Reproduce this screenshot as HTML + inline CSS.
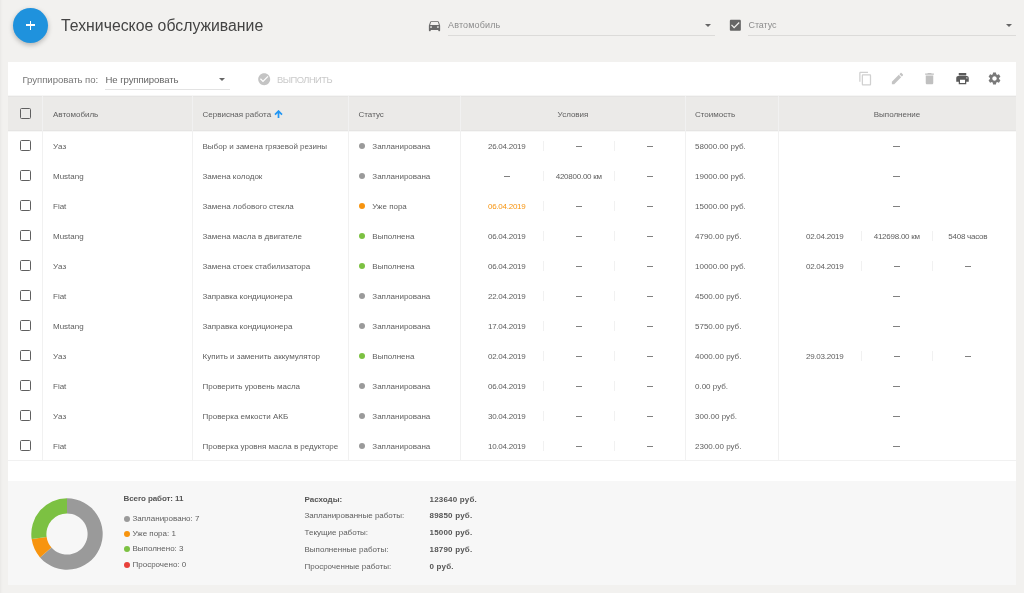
<!DOCTYPE html>
<html><head><meta charset="utf-8">
<style>
*{box-sizing:border-box;margin:0;padding:0}
html,body{width:1024px;height:593px;overflow:hidden}
body{background:#f2f1ef;font-family:"Liberation Sans",sans-serif;color:#5e5e5e;position:relative}
#w{position:absolute;left:0;top:0;width:1024px;height:593px;will-change:transform}
.abs{position:absolute}
.tx{white-space:nowrap}
.fab{left:13px;top:7.6px;width:35px;height:35px;border-radius:50%;background:#1f92dd;box-shadow:0 2px 5px rgba(0,0,0,.26)}
.uline{height:1px;background:#dcdbd9}
.arrow{width:0;height:0;border-left:3px solid transparent;border-right:3px solid transparent;border-top:3px solid #666}
.cb{width:11px;height:11px;border:1.7px solid #5f5f5f;border-radius:1.5px}
.vl{width:1px;background:#f1f1f1}
.dot{width:6px;height:6px;border-radius:50%}
</style></head><body><div id="w">
<div class="abs fab"><div class="abs" style="left:13px;top:16.7px;width:9px;height:1.6px;background:#fff"></div><div class="abs" style="left:16.7px;top:13px;width:1.6px;height:9px;background:#fff"></div></div>
<div class="abs tx" style="left:61px;top:15.95px;font-size:15.8px;line-height:19.75px;color:#444">Техническое обслуживание</div>
<svg class="abs" style="left:427px;top:17.5px" width="15" height="15" viewBox="0 0 24 24"><path fill="#6a6a6a" d="M18.92 6.01C18.72 5.42 18.160 5 17.5 5h-11c-.66 0-1.21.42-1.42 1.01L3 12v8c0 .55.45 1 1 1h1c.55 0 1-.45 1-1v-1h12v1c0 .55.45 1 1 1h1c.55 0 1-.45 1-1v-8l-2.08-5.99zM6.5 16c-.83 0-1.5-.67-1.5-1.5S5.67 13 6.5 13s1.5.67 1.5 1.5S7.33 16 6.5 16zm11 0c-.83 0-1.5-.67-1.5-1.5s.67-1.5 1.5-1.5 1.5.67 1.5 1.5-.67 1.5-1.5 1.5zM5 11l1.5-4.5h11L19 11H5z"/></svg>
<div class="abs tx" style="left:448px;top:20.25px;font-size:9px;line-height:11.25px;color:#8c8c8c;letter-spacing:0.15px">Автомобиль</div>
<div class="abs arrow" style="left:705px;top:24px"></div>
<div class="abs uline" style="left:448px;top:35px;width:267px"></div>
<svg class="abs" style="left:728.1px;top:18.2px" width="14.7" height="14.7" viewBox="0 0 24 24"><path fill="#666" d="M19 3H5c-1.11 0-2 .9-2 2v14c0 1.1.89 2 2 2h14c1.11 0 2-.9 2-2V5c0-1.1-.89-2-2-2zm-9 14l-5-5 1.41-1.41L10 14.17l7.59-7.59L19 8l-9 9z"/></svg>
<div class="abs tx" style="left:748.5px;top:20.25px;font-size:9px;line-height:11.25px;color:#8c8c8c;letter-spacing:-0.1px">Статус</div>
<div class="abs arrow" style="left:1005.5px;top:24px"></div>
<div class="abs uline" style="left:748px;top:35px;width:268px"></div>
<div class="abs" style="left:0;top:0;width:3px;height:593px;background:linear-gradient(to right,#e9e8e6,#efeeec 50%,#f2f1ef)"></div>
<div class="abs" style="left:8px;top:61.5px;width:1008px;height:523.5px;background:#fff"></div>
<div class="abs" style="left:8px;top:96px;width:1008px;height:35px;background:#ebeae8"></div>
<div class="abs" style="left:8px;top:95px;width:1008px;height:1px;background:#f6f6f5"></div>
<div class="abs" style="left:8px;top:96px;width:1008px;height:1px;background:#e5e4e3"></div>
<div class="abs" style="left:8px;top:130px;width:1008px;height:1px;background:#e5e4e3"></div>
<div class="abs" style="left:8px;top:131px;width:1008px;height:1px;background:#f7f7f6"></div>
<div class="abs" style="left:8px;top:481px;width:1008px;height:104px;background:#f7f7f7"></div>
<div class="abs tx" style="left:22.5px;top:73.87px;font-size:9.6px;line-height:12.0px;color:#777;letter-spacing:-0.05px">Группировать по:</div>
<div class="abs tx" style="left:105.5px;top:73.87px;font-size:9.6px;line-height:12.0px;color:#666;letter-spacing:-0.1px">Не группировать</div>
<div class="abs arrow" style="left:219px;top:78px"></div>
<div class="abs uline" style="left:105px;top:89px;width:125px;background:#e3e3e3"></div>
<svg class="abs" style="left:256.8px;top:71.8px" width="14.4" height="14.4" viewBox="0 0 24 24"><path fill="#c4c4c4" d="M12 2C6.48 2 2 6.48 2 12s4.48 10 10 10 10-4.48 10-10S17.52 2 12 2zm-2 15l-5-5 1.41-1.41L10 14.17l7.59-7.59L19 8l-9 9z"/></svg>
<div class="abs tx" style="left:277px;top:73.67px;font-size:9.4px;line-height:11.75px;color:#cacaca;letter-spacing:-0.55px">ВЫПОЛНИТЬ</div>
<svg class="abs" style="left:857.55px;top:71.0px" width="15" height="15" viewBox="0 0 24 24"><path fill="#d0d0d0" d="M16 1H4c-1.1 0-2 .9-2 2v14h2V3h12V1zm3 4H8c-1.1 0-2 .9-2 2v14c0 1.1.9 2 2 2h11c1.1 0 2-.9 2-2V7c0-1.1-.9-2-2-2zm0 16H8V7h11v14z"/></svg>
<svg class="abs" style="left:890.0px;top:71.1px" width="15" height="15" viewBox="0 0 24 24"><path fill="#c4c4c4" d="M3 17.25V21h3.75L17.81 9.94l-3.75-3.75L3 17.25zM20.71 7.04c.39-.39.39-1.02 0-1.41l-2.34-2.34c-.39-.39-1.02-.39-1.41 0l-1.83 1.83 3.75 3.75 1.83-1.83z"/></svg>
<svg class="abs" style="left:922.1px;top:70.7px" width="15" height="15" viewBox="0 0 24 24"><path fill="#c0c0c0" d="M6 19c0 1.1.9 2 2 2h8c1.1 0 2-.9 2-2V7H6v12zM19 4h-3.5l-1-1h-5l-1 1H5v2h14V4z"/></svg>
<svg class="abs" style="left:954.75px;top:71.0px" width="15" height="15" viewBox="0 0 24 24"><path fill="#5a5a5a" d="M19 8H5c-1.66 0-3 1.34-3 3v6h4v4h12v-4h4v-6c0-1.66-1.34-3-3-3zm-3 11H8v-5h8v5zm3-7c-.55 0-1-.45-1-1s.45-1 1-1 1 .45 1 1-.45 1-1 1zm-1-9H6v4h12V3z"/></svg>
<svg class="abs" style="left:987.1px;top:70.95px" width="15" height="15" viewBox="0 0 24 24"><path fill="#7a7a7a" d="M19.14 12.94c.04-.3.06-.61.06-.94 0-.32-.02-.64-.07-.94l2.03-1.58c.18-.14.23-.41.12-.61l-1.92-3.32c-.12-.22-.37-.29-.59-.22l-2.39.96c-.5-.38-1.03-.7-1.620-.94l-.36-2.54c-.04-.24-.24-.41-.48-.41h-3.84c-.24 0-.43.17-.47.41l-.36 2.54c-.59.24-1.13.57-1.62.94l-2.39-.96c-.22-.08-.47 0-.59.22L2.740 8.87c-.12.21-.08.47.12.61l2.03 1.58c-.05.3-.09.63-.09.94s.02.64.07.94l-2.03 1.58c-.18.14-.23.41-.12.61l1.92 3.32c.12.22.37.29.59.22l2.39-.96c.5.38 1.03.7 1.62.94l.36 2.54c.05.24.24.41.48.41h3.84c.24 0 .44-.17.47-.41l.36-2.54c.59-.24 1.13-.56 1.62-.94l2.39.96c.22.08.47 0 .59-.22l1.92-3.32c.12-.22.07-.47-.12-.61l-2.01-1.58zM12 15.6c-1.98 0-3.6-1.62-3.6-3.6s1.62-3.6 3.6-3.6 3.6 1.62 3.6 3.6-1.620 3.6-3.6 3.6z"/></svg>
<div class="abs vl" style="left:42px;top:96px;height:365px"></div>
<div class="abs vl" style="left:192px;top:96px;height:365px"></div>
<div class="abs vl" style="left:348px;top:96px;height:365px"></div>
<div class="abs vl" style="left:460px;top:96px;height:365px"></div>
<div class="abs vl" style="left:685px;top:96px;height:365px"></div>
<div class="abs vl" style="left:778px;top:96px;height:365px"></div>
<div class="abs" style="left:8px;top:460px;width:1008px;height:1px;background:#f1f1f1"></div>
<div class="abs cb" style="left:20px;top:108px"></div>
<div class="abs tx" style="left:53px;top:109.83px;font-size:8.0px;line-height:10.0px;color:#5e5e5e;letter-spacing:0px">Автомобиль</div>
<div class="abs tx" style="left:202.5px;top:109.83px;font-size:8.0px;line-height:10.0px;color:#5e5e5e;letter-spacing:0px">Сервисная работа</div>
<svg class="abs" style="left:274px;top:110px" width="9" height="8" viewBox="0 0 9 8"><path fill="none" stroke="#2196f3" stroke-width="1.7" d="M4.5 8V1.2M1 4.6L4.5 1.1 8 4.6"/></svg>
<div class="abs tx" style="left:358.5px;top:109.83px;font-size:8.0px;line-height:10.0px;color:#5e5e5e;letter-spacing:0px">Статус</div>
<div class="abs tx" style="left:461px;top:109.83px;font-size:8.0px;line-height:10.0px;color:#5e5e5e;width:224px;text-align:center;letter-spacing:0px">Условия</div>
<div class="abs tx" style="left:695px;top:109.83px;font-size:8.0px;line-height:10.0px;color:#5e5e5e;letter-spacing:0px">Стоимость</div>
<div class="abs tx" style="left:778px;top:109.83px;font-size:8.0px;line-height:10.0px;color:#5e5e5e;width:238px;text-align:center;letter-spacing:0px">Выполнение</div>
<div class="abs cb" style="left:20px;top:140px"></div>
<div class="abs tx" style="left:53px;top:141.83px;font-size:8.0px;line-height:10.0px;color:#5e5e5e;letter-spacing:0px">Уаз</div>
<div class="abs tx" style="left:202.5px;top:141.83px;font-size:8.0px;line-height:10.0px;color:#5e5e5e;letter-spacing:0px">Выбор и замена грязевой резины</div>
<div class="abs dot" style="left:359px;top:143.2px;background:#9a9a9a"></div>
<div class="abs tx" style="left:372.3px;top:141.83px;font-size:8.0px;line-height:10.0px;color:#5e5e5e;letter-spacing:0px">Запланирована</div>
<div class="abs tx" style="left:471px;top:141.83px;font-size:8.0px;line-height:10.0px;color:#5e5e5e;width:71.5px;text-align:center;letter-spacing:-0.25px">26.04.2019</div>
<div class="abs" style="left:575.55px;top:146.10px;width:6.6px;height:1.3px;background:#808080"></div>
<div class="abs" style="left:646.55px;top:146.10px;width:6.6px;height:1.3px;background:#808080"></div>
<div class="abs vl" style="left:542.5px;top:141px;height:10px"></div>
<div class="abs vl" style="left:614px;top:141px;height:10px"></div>
<div class="abs tx" style="left:695px;top:141.83px;font-size:8.0px;line-height:10.0px;color:#5e5e5e;letter-spacing:0px">58000.00 руб.</div>
<div class="abs" style="left:893.30px;top:146.10px;width:6.6px;height:1.3px;background:#808080"></div>
<div class="abs cb" style="left:20px;top:170px"></div>
<div class="abs tx" style="left:53px;top:171.83px;font-size:8.0px;line-height:10.0px;color:#5e5e5e;letter-spacing:0px">Mustang</div>
<div class="abs tx" style="left:202.5px;top:171.83px;font-size:8.0px;line-height:10.0px;color:#5e5e5e;letter-spacing:0px">Замена колодок</div>
<div class="abs dot" style="left:359px;top:173.2px;background:#9a9a9a"></div>
<div class="abs tx" style="left:372.3px;top:171.83px;font-size:8.0px;line-height:10.0px;color:#5e5e5e;letter-spacing:0px">Запланирована</div>
<div class="abs" style="left:503.55px;top:176.10px;width:6.6px;height:1.3px;background:#808080"></div>
<div class="abs tx" style="left:543px;top:171.83px;font-size:8.0px;line-height:10.0px;color:#5e5e5e;width:71.5px;text-align:center;letter-spacing:-0.25px">420800.00 км</div>
<div class="abs" style="left:646.55px;top:176.10px;width:6.6px;height:1.3px;background:#808080"></div>
<div class="abs vl" style="left:542.5px;top:171px;height:10px"></div>
<div class="abs vl" style="left:614px;top:171px;height:10px"></div>
<div class="abs tx" style="left:695px;top:171.83px;font-size:8.0px;line-height:10.0px;color:#5e5e5e;letter-spacing:0px">19000.00 руб.</div>
<div class="abs" style="left:893.30px;top:176.10px;width:6.6px;height:1.3px;background:#808080"></div>
<div class="abs cb" style="left:20px;top:200px"></div>
<div class="abs tx" style="left:53px;top:201.83px;font-size:8.0px;line-height:10.0px;color:#5e5e5e;letter-spacing:0px">Fiat</div>
<div class="abs tx" style="left:202.5px;top:201.83px;font-size:8.0px;line-height:10.0px;color:#5e5e5e;letter-spacing:0px">Замена лобового стекла</div>
<div class="abs dot" style="left:359px;top:203.2px;background:#f7940f"></div>
<div class="abs tx" style="left:372.3px;top:201.83px;font-size:8.0px;line-height:10.0px;color:#5e5e5e;letter-spacing:0px">Уже пора</div>
<div class="abs tx" style="left:471px;top:201.83px;font-size:8.0px;line-height:10.0px;color:#f7940f;width:71.5px;text-align:center;letter-spacing:-0.25px">06.04.2019</div>
<div class="abs" style="left:575.55px;top:206.10px;width:6.6px;height:1.3px;background:#808080"></div>
<div class="abs" style="left:646.55px;top:206.10px;width:6.6px;height:1.3px;background:#808080"></div>
<div class="abs vl" style="left:542.5px;top:201px;height:10px"></div>
<div class="abs vl" style="left:614px;top:201px;height:10px"></div>
<div class="abs tx" style="left:695px;top:201.83px;font-size:8.0px;line-height:10.0px;color:#5e5e5e;letter-spacing:0px">15000.00 руб.</div>
<div class="abs" style="left:893.30px;top:206.10px;width:6.6px;height:1.3px;background:#808080"></div>
<div class="abs cb" style="left:20px;top:230px"></div>
<div class="abs tx" style="left:53px;top:231.83px;font-size:8.0px;line-height:10.0px;color:#5e5e5e;letter-spacing:0px">Mustang</div>
<div class="abs tx" style="left:202.5px;top:231.83px;font-size:8.0px;line-height:10.0px;color:#5e5e5e;letter-spacing:0px">Замена масла в двигателе</div>
<div class="abs dot" style="left:359px;top:233.2px;background:#7cc142"></div>
<div class="abs tx" style="left:372.3px;top:231.83px;font-size:8.0px;line-height:10.0px;color:#5e5e5e;letter-spacing:0px">Выполнена</div>
<div class="abs tx" style="left:471px;top:231.83px;font-size:8.0px;line-height:10.0px;color:#5e5e5e;width:71.5px;text-align:center;letter-spacing:-0.25px">06.04.2019</div>
<div class="abs" style="left:575.55px;top:236.10px;width:6.6px;height:1.3px;background:#808080"></div>
<div class="abs" style="left:646.55px;top:236.10px;width:6.6px;height:1.3px;background:#808080"></div>
<div class="abs vl" style="left:542.5px;top:231px;height:10px"></div>
<div class="abs vl" style="left:614px;top:231px;height:10px"></div>
<div class="abs tx" style="left:695px;top:231.83px;font-size:8.0px;line-height:10.0px;color:#5e5e5e;letter-spacing:0px">4790.00 руб.</div>
<div class="abs tx" style="left:789px;top:231.83px;font-size:8.0px;line-height:10.0px;color:#5e5e5e;width:71.5px;text-align:center;letter-spacing:-0.25px">02.04.2019</div>
<div class="abs tx" style="left:861px;top:231.83px;font-size:8.0px;line-height:10.0px;color:#5e5e5e;width:71.5px;text-align:center;letter-spacing:-0.25px">412698.00 км</div>
<div class="abs tx" style="left:932px;top:231.83px;font-size:8.0px;line-height:10.0px;color:#5e5e5e;width:71.5px;text-align:center;letter-spacing:-0.25px">5408 часов</div>
<div class="abs vl" style="left:860.5px;top:231px;height:10px"></div>
<div class="abs vl" style="left:932px;top:231px;height:10px"></div>
<div class="abs cb" style="left:20px;top:260px"></div>
<div class="abs tx" style="left:53px;top:261.83px;font-size:8.0px;line-height:10.0px;color:#5e5e5e;letter-spacing:0px">Уаз</div>
<div class="abs tx" style="left:202.5px;top:261.83px;font-size:8.0px;line-height:10.0px;color:#5e5e5e;letter-spacing:0px">Замена стоек стабилизатора</div>
<div class="abs dot" style="left:359px;top:263.2px;background:#7cc142"></div>
<div class="abs tx" style="left:372.3px;top:261.83px;font-size:8.0px;line-height:10.0px;color:#5e5e5e;letter-spacing:0px">Выполнена</div>
<div class="abs tx" style="left:471px;top:261.83px;font-size:8.0px;line-height:10.0px;color:#5e5e5e;width:71.5px;text-align:center;letter-spacing:-0.25px">06.04.2019</div>
<div class="abs" style="left:575.55px;top:266.10px;width:6.6px;height:1.3px;background:#808080"></div>
<div class="abs" style="left:646.55px;top:266.10px;width:6.6px;height:1.3px;background:#808080"></div>
<div class="abs vl" style="left:542.5px;top:261px;height:10px"></div>
<div class="abs vl" style="left:614px;top:261px;height:10px"></div>
<div class="abs tx" style="left:695px;top:261.83px;font-size:8.0px;line-height:10.0px;color:#5e5e5e;letter-spacing:0px">10000.00 руб.</div>
<div class="abs tx" style="left:789px;top:261.83px;font-size:8.0px;line-height:10.0px;color:#5e5e5e;width:71.5px;text-align:center;letter-spacing:-0.25px">02.04.2019</div>
<div class="abs" style="left:893.55px;top:266.10px;width:6.6px;height:1.3px;background:#808080"></div>
<div class="abs" style="left:964.55px;top:266.10px;width:6.6px;height:1.3px;background:#808080"></div>
<div class="abs vl" style="left:860.5px;top:261px;height:10px"></div>
<div class="abs vl" style="left:932px;top:261px;height:10px"></div>
<div class="abs cb" style="left:20px;top:290px"></div>
<div class="abs tx" style="left:53px;top:291.83px;font-size:8.0px;line-height:10.0px;color:#5e5e5e;letter-spacing:0px">Fiat</div>
<div class="abs tx" style="left:202.5px;top:291.83px;font-size:8.0px;line-height:10.0px;color:#5e5e5e;letter-spacing:0px">Заправка кондиционера</div>
<div class="abs dot" style="left:359px;top:293.2px;background:#9a9a9a"></div>
<div class="abs tx" style="left:372.3px;top:291.83px;font-size:8.0px;line-height:10.0px;color:#5e5e5e;letter-spacing:0px">Запланирована</div>
<div class="abs tx" style="left:471px;top:291.83px;font-size:8.0px;line-height:10.0px;color:#5e5e5e;width:71.5px;text-align:center;letter-spacing:-0.25px">22.04.2019</div>
<div class="abs" style="left:575.55px;top:296.10px;width:6.6px;height:1.3px;background:#808080"></div>
<div class="abs" style="left:646.55px;top:296.10px;width:6.6px;height:1.3px;background:#808080"></div>
<div class="abs vl" style="left:542.5px;top:291px;height:10px"></div>
<div class="abs vl" style="left:614px;top:291px;height:10px"></div>
<div class="abs tx" style="left:695px;top:291.83px;font-size:8.0px;line-height:10.0px;color:#5e5e5e;letter-spacing:0px">4500.00 руб.</div>
<div class="abs" style="left:893.30px;top:296.10px;width:6.6px;height:1.3px;background:#808080"></div>
<div class="abs cb" style="left:20px;top:320px"></div>
<div class="abs tx" style="left:53px;top:321.83px;font-size:8.0px;line-height:10.0px;color:#5e5e5e;letter-spacing:0px">Mustang</div>
<div class="abs tx" style="left:202.5px;top:321.83px;font-size:8.0px;line-height:10.0px;color:#5e5e5e;letter-spacing:0px">Заправка кондиционера</div>
<div class="abs dot" style="left:359px;top:323.2px;background:#9a9a9a"></div>
<div class="abs tx" style="left:372.3px;top:321.83px;font-size:8.0px;line-height:10.0px;color:#5e5e5e;letter-spacing:0px">Запланирована</div>
<div class="abs tx" style="left:471px;top:321.83px;font-size:8.0px;line-height:10.0px;color:#5e5e5e;width:71.5px;text-align:center;letter-spacing:-0.25px">17.04.2019</div>
<div class="abs" style="left:575.55px;top:326.10px;width:6.6px;height:1.3px;background:#808080"></div>
<div class="abs" style="left:646.55px;top:326.10px;width:6.6px;height:1.3px;background:#808080"></div>
<div class="abs vl" style="left:542.5px;top:321px;height:10px"></div>
<div class="abs vl" style="left:614px;top:321px;height:10px"></div>
<div class="abs tx" style="left:695px;top:321.83px;font-size:8.0px;line-height:10.0px;color:#5e5e5e;letter-spacing:0px">5750.00 руб.</div>
<div class="abs" style="left:893.30px;top:326.10px;width:6.6px;height:1.3px;background:#808080"></div>
<div class="abs cb" style="left:20px;top:350px"></div>
<div class="abs tx" style="left:53px;top:351.83px;font-size:8.0px;line-height:10.0px;color:#5e5e5e;letter-spacing:0px">Уаз</div>
<div class="abs tx" style="left:202.5px;top:351.83px;font-size:8.0px;line-height:10.0px;color:#5e5e5e;letter-spacing:0px">Купить и заменить аккумулятор</div>
<div class="abs dot" style="left:359px;top:353.2px;background:#7cc142"></div>
<div class="abs tx" style="left:372.3px;top:351.83px;font-size:8.0px;line-height:10.0px;color:#5e5e5e;letter-spacing:0px">Выполнена</div>
<div class="abs tx" style="left:471px;top:351.83px;font-size:8.0px;line-height:10.0px;color:#5e5e5e;width:71.5px;text-align:center;letter-spacing:-0.25px">02.04.2019</div>
<div class="abs" style="left:575.55px;top:356.10px;width:6.6px;height:1.3px;background:#808080"></div>
<div class="abs" style="left:646.55px;top:356.10px;width:6.6px;height:1.3px;background:#808080"></div>
<div class="abs vl" style="left:542.5px;top:351px;height:10px"></div>
<div class="abs vl" style="left:614px;top:351px;height:10px"></div>
<div class="abs tx" style="left:695px;top:351.83px;font-size:8.0px;line-height:10.0px;color:#5e5e5e;letter-spacing:0px">4000.00 руб.</div>
<div class="abs tx" style="left:789px;top:351.83px;font-size:8.0px;line-height:10.0px;color:#5e5e5e;width:71.5px;text-align:center;letter-spacing:-0.25px">29.03.2019</div>
<div class="abs" style="left:893.55px;top:356.10px;width:6.6px;height:1.3px;background:#808080"></div>
<div class="abs" style="left:964.55px;top:356.10px;width:6.6px;height:1.3px;background:#808080"></div>
<div class="abs vl" style="left:860.5px;top:351px;height:10px"></div>
<div class="abs vl" style="left:932px;top:351px;height:10px"></div>
<div class="abs cb" style="left:20px;top:380px"></div>
<div class="abs tx" style="left:53px;top:381.83px;font-size:8.0px;line-height:10.0px;color:#5e5e5e;letter-spacing:0px">Fiat</div>
<div class="abs tx" style="left:202.5px;top:381.83px;font-size:8.0px;line-height:10.0px;color:#5e5e5e;letter-spacing:0px">Проверить уровень масла</div>
<div class="abs dot" style="left:359px;top:383.2px;background:#9a9a9a"></div>
<div class="abs tx" style="left:372.3px;top:381.83px;font-size:8.0px;line-height:10.0px;color:#5e5e5e;letter-spacing:0px">Запланирована</div>
<div class="abs tx" style="left:471px;top:381.83px;font-size:8.0px;line-height:10.0px;color:#5e5e5e;width:71.5px;text-align:center;letter-spacing:-0.25px">06.04.2019</div>
<div class="abs" style="left:575.55px;top:386.10px;width:6.6px;height:1.3px;background:#808080"></div>
<div class="abs" style="left:646.55px;top:386.10px;width:6.6px;height:1.3px;background:#808080"></div>
<div class="abs vl" style="left:542.5px;top:381px;height:10px"></div>
<div class="abs vl" style="left:614px;top:381px;height:10px"></div>
<div class="abs tx" style="left:695px;top:381.83px;font-size:8.0px;line-height:10.0px;color:#5e5e5e;letter-spacing:0px">0.00 руб.</div>
<div class="abs" style="left:893.30px;top:386.10px;width:6.6px;height:1.3px;background:#808080"></div>
<div class="abs cb" style="left:20px;top:410px"></div>
<div class="abs tx" style="left:53px;top:411.83px;font-size:8.0px;line-height:10.0px;color:#5e5e5e;letter-spacing:0px">Уаз</div>
<div class="abs tx" style="left:202.5px;top:411.83px;font-size:8.0px;line-height:10.0px;color:#5e5e5e;letter-spacing:0px">Проверка емкости АКБ</div>
<div class="abs dot" style="left:359px;top:413.2px;background:#9a9a9a"></div>
<div class="abs tx" style="left:372.3px;top:411.83px;font-size:8.0px;line-height:10.0px;color:#5e5e5e;letter-spacing:0px">Запланирована</div>
<div class="abs tx" style="left:471px;top:411.83px;font-size:8.0px;line-height:10.0px;color:#5e5e5e;width:71.5px;text-align:center;letter-spacing:-0.25px">30.04.2019</div>
<div class="abs" style="left:575.55px;top:416.10px;width:6.6px;height:1.3px;background:#808080"></div>
<div class="abs" style="left:646.55px;top:416.10px;width:6.6px;height:1.3px;background:#808080"></div>
<div class="abs vl" style="left:542.5px;top:411px;height:10px"></div>
<div class="abs vl" style="left:614px;top:411px;height:10px"></div>
<div class="abs tx" style="left:695px;top:411.83px;font-size:8.0px;line-height:10.0px;color:#5e5e5e;letter-spacing:0px">300.00 руб.</div>
<div class="abs" style="left:893.30px;top:416.10px;width:6.6px;height:1.3px;background:#808080"></div>
<div class="abs cb" style="left:20px;top:440px"></div>
<div class="abs tx" style="left:53px;top:441.83px;font-size:8.0px;line-height:10.0px;color:#5e5e5e;letter-spacing:0px">Fiat</div>
<div class="abs tx" style="left:202.5px;top:441.83px;font-size:8.0px;line-height:10.0px;color:#5e5e5e;letter-spacing:0px">Проверка уровня масла в редукторе</div>
<div class="abs dot" style="left:359px;top:443.2px;background:#9a9a9a"></div>
<div class="abs tx" style="left:372.3px;top:441.83px;font-size:8.0px;line-height:10.0px;color:#5e5e5e;letter-spacing:0px">Запланирована</div>
<div class="abs tx" style="left:471px;top:441.83px;font-size:8.0px;line-height:10.0px;color:#5e5e5e;width:71.5px;text-align:center;letter-spacing:-0.25px">10.04.2019</div>
<div class="abs" style="left:575.55px;top:446.10px;width:6.6px;height:1.3px;background:#808080"></div>
<div class="abs" style="left:646.55px;top:446.10px;width:6.6px;height:1.3px;background:#808080"></div>
<div class="abs vl" style="left:542.5px;top:441px;height:10px"></div>
<div class="abs vl" style="left:614px;top:441px;height:10px"></div>
<div class="abs tx" style="left:695px;top:441.83px;font-size:8.0px;line-height:10.0px;color:#5e5e5e;letter-spacing:0px">2300.00 руб.</div>
<div class="abs" style="left:893.30px;top:446.10px;width:6.6px;height:1.3px;background:#808080"></div>
<svg class="abs" style="left:31px;top:497.5px" width="72" height="72" viewBox="-36 -36 72 72"><path fill="#9a9a9a" d="M0.00 -35.70A35.7 35.7 0 1 1 -26.98 23.38L-15.57 13.49A20.6 20.6 0 1 0 0.00 -20.60Z"/><path fill="#f7940f" d="M-26.98 23.38A35.7 35.7 0 0 1 -35.34 5.08L-20.39 2.93A20.6 20.6 0 0 0 -15.57 13.49Z"/><path fill="#7cc142" d="M-35.34 5.08A35.7 35.7 0 0 1 -0.00 -35.70L-0.00 -20.60A20.6 20.6 0 0 0 -20.39 2.93Z"/></svg>
<div class="abs tx" style="left:123.5px;top:494.23px;font-size:8.0px;line-height:10.0px;color:#555;font-weight:bold;letter-spacing:-0.1px">Всего работ: 11</div>
<div class="abs dot" style="left:123.5px;top:515.5px;background:#9a9a9a"></div>
<div class="abs tx" style="left:132.5px;top:513.73px;font-size:8.0px;line-height:10.0px;color:#5e5e5e;letter-spacing:0px">Запланировано: 7</div>
<div class="abs dot" style="left:123.5px;top:530.8px;background:#f7940f"></div>
<div class="abs tx" style="left:132.5px;top:529.03px;font-size:8.0px;line-height:10.0px;color:#5e5e5e;letter-spacing:0px">Уже пора: 1</div>
<div class="abs dot" style="left:123.5px;top:546.2px;background:#7cc142"></div>
<div class="abs tx" style="left:132.5px;top:544.43px;font-size:8.0px;line-height:10.0px;color:#5e5e5e;letter-spacing:0px">Выполнено: 3</div>
<div class="abs dot" style="left:123.5px;top:561.9px;background:#e8403a"></div>
<div class="abs tx" style="left:132.5px;top:560.13px;font-size:8.0px;line-height:10.0px;color:#5e5e5e;letter-spacing:0px">Просрочено: 0</div>
<div class="abs tx" style="left:304.5px;top:494.73px;font-size:8.0px;line-height:10.0px;color:#555;font-weight:bold;letter-spacing:0px">Расходы:</div>
<div class="abs tx" style="left:429.5px;top:494.73px;font-size:8.0px;line-height:10.0px;color:#555;font-weight:bold;letter-spacing:0.2px">123640 руб.</div>
<div class="abs tx" style="left:304.5px;top:511.23px;font-size:8.0px;line-height:10.0px;color:#5e5e5e;letter-spacing:0px">Запланированные работы:</div>
<div class="abs tx" style="left:429.5px;top:511.23px;font-size:8.0px;line-height:10.0px;color:#555;font-weight:bold;letter-spacing:0.2px">89850 руб.</div>
<div class="abs tx" style="left:304.5px;top:528.13px;font-size:8.0px;line-height:10.0px;color:#5e5e5e;letter-spacing:0px">Текущие работы:</div>
<div class="abs tx" style="left:429.5px;top:528.13px;font-size:8.0px;line-height:10.0px;color:#555;font-weight:bold;letter-spacing:0.2px">15000 руб.</div>
<div class="abs tx" style="left:304.5px;top:544.53px;font-size:8.0px;line-height:10.0px;color:#5e5e5e;letter-spacing:0px">Выполненные работы:</div>
<div class="abs tx" style="left:429.5px;top:544.53px;font-size:8.0px;line-height:10.0px;color:#555;font-weight:bold;letter-spacing:0.2px">18790 руб.</div>
<div class="abs tx" style="left:304.5px;top:561.63px;font-size:8.0px;line-height:10.0px;color:#5e5e5e;letter-spacing:0px">Просроченные работы:</div>
<div class="abs tx" style="left:429.5px;top:561.63px;font-size:8.0px;line-height:10.0px;color:#555;font-weight:bold;letter-spacing:0.2px">0 руб.</div>
</div></body></html>
